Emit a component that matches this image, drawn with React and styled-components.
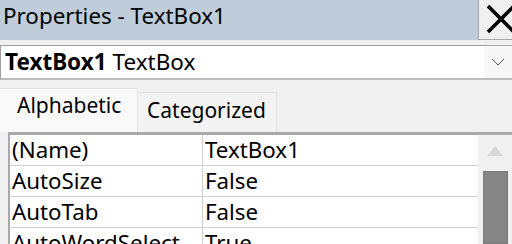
import React from "react";
import styled, { createGlobalStyle } from "styled-components";

const Global = createGlobalStyle`
  html, body { margin: 0; padding: 0; background: #f0f0f0; overflow: hidden; }
  * { box-sizing: border-box; }
`;

const FONT = `"Noto Sans", "Open Sans", sans-serif`;

const Window = styled.div`
  width: 512px;
  height: 244px;
  display: flex;
  flex-direction: column;
  background: #f0f0f0;
  font-family: ${FONT};
  color: #000;
  overflow: hidden;
`;

const TitleBar = styled.div`
  height: 40px;
  flex: none;
  display: flex;
  align-items: stretch;
  justify-content: space-between;
  background: #bfcddb;
`;

const Title = styled.div`
  font-size: 22.4px;
  line-height: 32px;
  padding-left: 3px;
  white-space: nowrap;
`;

const CloseButton = styled.div`
  width: 34px;
  flex: none;
  display: flex;
  align-items: flex-start;
  justify-content: flex-start;
  padding: 5px 0 0 7px;
  background: #f0f0f0;
  border-left: 1px solid #a6a6a6;
  border-bottom: 1px solid #a6a6a6;
  overflow: hidden;
`;

const Combo = styled.div`
  margin-top: 5px;
  height: 35px;
  flex: none;
  display: flex;
  align-items: center;
  background: #fff;
  border-top: 1px solid #a0a0a0;
  border-bottom: 2px solid #bdbdbd;
  border-left: 1px solid #a0a0a0;
`;

const ComboText = styled.div`
  flex: 1;
  font-size: 22.5px;
  line-height: 30px;
  padding-left: 4px;
  white-space: nowrap;
  b { font-weight: 700; }
`;

const ComboArrow = styled.div`
  width: 28px;
  align-self: stretch;
  display: flex;
  align-items: center;
  justify-content: center;
  background: #f7f7f7;
`;

const TabRow = styled.div`
  height: 52px;
  flex: none;
  display: flex;
  align-items: flex-end;
`;

const Tab = styled.div`
  width: ${(p) => p.$w}px;
  height: ${(p) => (p.$active ? 44 : 40)}px;
  display: flex;
  align-items: flex-start;
  padding-top: ${(p) => (p.$active ? 2 : 3)}px;
  padding-left: ${(p) => p.$pl}px;
  font-size: 21px;
  white-space: nowrap;
  background: ${(p) => (p.$active ? "#f9f9f9" : "#f3f3f3")};
  border-top: 1px solid #e3e3e3;
  border-right: 1px solid #e3e3e3;
`;

const Page = styled.div`
  flex: 1;
  display: flex;
  padding-left: 8px;
  min-height: 0;
`;

const Grid = styled.div`
  flex: 1;
  background: #fff;
  border-top: 3px solid #a9a9a9;
  border-left: 2px solid #a9a9a9;
  display: flex;
  flex-direction: column;
  min-width: 0;
`;

const Row = styled.div`
  height: 31px;
  flex: none;
  display: grid;
  grid-template-columns: 193px 1fr;
  border-bottom: 1px solid #d0d0d0;
`;

const Cell = styled.div`
  font-size: 22.3px;
  line-height: 30px;
  padding-left: 2px;
  white-space: nowrap;
  overflow: hidden;
  border-right: ${(p) => (p.$name ? "1px solid #d0d0d0" : "none")};
`;

const Scrollbar = styled.div`
  width: 34px;
  flex: none;
  background: #f0f0f0;
  border-top: 3px solid #a9a9a9;
  display: flex;
  flex-direction: column;
  align-items: center;
`;

const ArrowUp = styled.div`
  margin-top: 11px;
  width: 0;
  height: 0;
  border-left: 8px solid transparent;
  border-right: 8px solid transparent;
  border-bottom: 10px solid #d9d9d9;
`;

const Thumb = styled.div`
  margin-top: 15px;
  width: 25px;
  flex: 1;
  background: #858585;
  border: 1px solid #7a7a7a;
`;

const rows = [
  ["(Name)", "TextBox1"],
  ["AutoSize", "False"],
  ["AutoTab", "False"],
  ["AutoWordSelect", "True"],
];

export default function App() {
  return (
    <Window>
      <Global />
      <TitleBar>
        <Title>Properties - TextBox1</Title>
        <CloseButton>
          <svg width="30" height="28" viewBox="0 0 30 28" style={{ flex: "none" }}>
            <path d="M2 1 L28 27 M28 1 L2 27" stroke="#000" strokeWidth="3.6" />
          </svg>
        </CloseButton>
      </TitleBar>
      <Combo>
        <ComboText>
          <b>TextBox1</b> TextBox
        </ComboText>
        <ComboArrow>
          <svg width="14" height="8" viewBox="0 0 14 8">
            <path d="M1 1 L7 7 L13 1" stroke="#555" strokeWidth="1" fill="none" />
          </svg>
        </ComboArrow>
      </Combo>
      <TabRow>
        <Tab $active $w={138} $pl={17}>Alphabetic</Tab>
        <Tab $w={139} $pl={9}>Categorized</Tab>
      </TabRow>
      <Page>
        <Grid>
          {rows.map(([n, v]) => (
            <Row key={n}>
              <Cell $name>{n}</Cell>
              <Cell>{v}</Cell>
            </Row>
          ))}
        </Grid>
        <Scrollbar>
          <ArrowUp />
          <Thumb />
        </Scrollbar>
      </Page>
    </Window>
  );
}
